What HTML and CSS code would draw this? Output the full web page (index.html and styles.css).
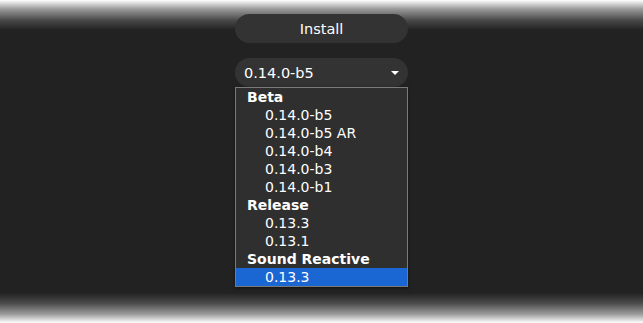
FILE: index.html
```
<!DOCTYPE html>
<html lang="en">
<head>
    <meta charset="UTF-8">
    <meta name="viewport" content="width=device-width, initial-scale=1.0">
    <title>Install</title>
    <link rel="stylesheet" href="styles.css">
</head>
<body>
    <div class="panel">
        <button class="install-btn">Install</button>
        <div class="version-select">
            <div class="select-box">
                <span>0.14.0-b5</span>
                <span class="arrow"></span>
            </div>
            <div class="select-list">
                <div class="group">Beta</div>
                <div class="option">0.14.0-b5</div>
                <div class="option">0.14.0-b5 AR</div>
                <div class="option">0.14.0-b4</div>
                <div class="option">0.14.0-b3</div>
                <div class="option">0.14.0-b1</div>
                <div class="group">Release</div>
                <div class="option">0.13.3</div>
                <div class="option">0.13.1</div>
                <div class="group">Sound Reactive</div>
                <div class="option selected">0.13.3</div>
            </div>
        </div>
    </div>
</body>
</html>
```
FILE: styles.css
```
html, body {
    height: 100%;
}

/* fondo oscuro con bordes difuminados arriba y abajo */
body {
    margin: 0;
    padding: 0;
    background: linear-gradient(to bottom,
        #ffffff 0,
        #9a9a9a 9px,
        #4a4a4a 20px,
        #222222 30px,
        #222222 calc(100% - 30px),
        #4a4a4a calc(100% - 20px),
        #9a9a9a calc(100% - 9px),
        #ffffff 100%);
    font-family: "DejaVu Sans", Verdana, sans-serif;
    color: white;
    overflow: hidden;
}

.panel {
    width: 173px;
    margin: 0 auto;
    padding-top: 14px;
}

.install-btn {
    display: block;
    width: 100%;
    height: 29px;
    padding: 0;
    border: none;
    border-radius: 15px;
    background-color: #333333;
    color: white;
    font-family: "DejaVu Sans", Verdana, sans-serif;
    font-size: 14.5px;
    cursor: pointer;
}

.version-select {
    margin-top: 15px;
}

.select-box {
    display: flex;
    justify-content: space-between;
    align-items: center;
    height: 29px;
    padding: 0 9px 0 9px;
    border-radius: 15px;
    background-color: #333333;
    font-size: 14.5px;
}

.arrow {
    width: 0;
    height: 0;
    border-left: 4px solid transparent;
    border-right: 4px solid transparent;
    border-top: 4px solid white;
}

.select-list {
    background-color: #2f2f2f;
    border: 1px solid #7a7a7a;
    font-size: 14px;
    box-shadow: 0 1px 3px rgba(0, 0, 0, 0.5);
}

.select-list .group {
    height: 18px;
    line-height: 18px;
    padding-left: 11px;
    font-weight: bold;
}

.select-list .option {
    height: 18px;
    line-height: 18px;
    padding-left: 29px;
}

.select-list .selected {
    background-color: #1a66d2;
}
```
